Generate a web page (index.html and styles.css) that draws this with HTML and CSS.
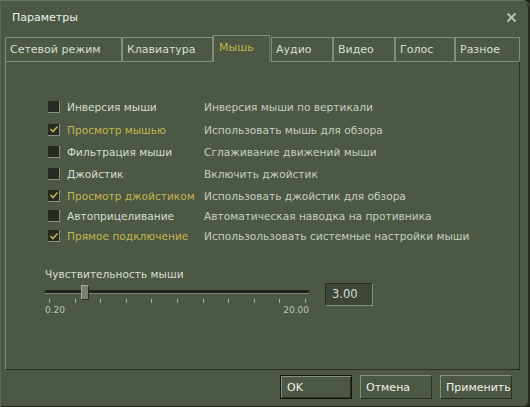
FILE: index.html
```html
<!DOCTYPE html>
<html lang="ru">

<head>
    <meta charset="UTF-8">
    <title>Параметры</title>
    <link rel="stylesheet" href="styles.css">
</head>

<body>
    <div class="window">
        <div class="titlebar">
            <span class="title">Параметры</span>
            <button class="close-btn">
                <svg width="11" height="11" viewBox="0 0 11 11">
                    <path d="M1.5 1.5 L9.5 9.5 M9.5 1.5 L1.5 9.5" stroke="#b9c0b3" stroke-width="2" fill="none" />
                </svg>
            </button>
        </div>

        <!-- Tabs -->
        <div class="tabs">
            <div class="tab tab-net">Сетевой режим</div>
            <div class="tab tab-keys">Клавиатура</div>
            <div class="tab tab-mouse active">Мышь</div>
            <div class="tab tab-audio">Аудио</div>
            <div class="tab tab-video">Видео</div>
            <div class="tab tab-voice">Голос</div>
            <div class="tab tab-misc">Разное</div>
        </div>

        <div class="panel">
            <!-- Mouse options -->
            <div class="options">
                <span class="check"></span>
                <span class="opt-label">Инверсия мыши</span>
                <span class="opt-desc">Инверсия мыши по вертикали</span>

                <span class="check checked"><svg width="10" height="10" viewBox="0 0 10 10"><path d="M1.5 5 L4 7.5 L8.5 2.5" /></svg></span>
                <span class="opt-label on">Просмотр мышью</span>
                <span class="opt-desc">Использовать мышь для обзора</span>

                <span class="check"></span>
                <span class="opt-label">Фильтрация мыши</span>
                <span class="opt-desc">Сглаживание движений мыши</span>

                <span class="check"></span>
                <span class="opt-label">Джойстик</span>
                <span class="opt-desc">Включить джойстик</span>

                <span class="check checked"><svg width="10" height="10" viewBox="0 0 10 10"><path d="M1.5 5 L4 7.5 L8.5 2.5" /></svg></span>
                <span class="opt-label on">Просмотр джойстиком</span>
                <span class="opt-desc">Использовать джойстик для обзора</span>

                <span class="check"></span>
                <span class="opt-label">Автоприцеливание</span>
                <span class="opt-desc">Автоматическая наводка на противника</span>

                <span class="check checked"><svg width="10" height="10" viewBox="0 0 10 10"><path d="M1.5 5 L4 7.5 L8.5 2.5" /></svg></span>
                <span class="opt-label on">Прямое подключение</span>
                <span class="opt-desc">Использользовать системные настройки мыши</span>
            </div>

            <!-- Sensitivity -->
            <div class="sens">
                <div class="sens-label">Чувствительность мыши</div>
                <div class="sens-row">
                    <div class="slider">
                        <div class="track"></div>
                        <div class="thumb"></div>
                        <div class="ticks">
                            <span></span><span></span><span></span><span></span><span></span><span></span>
                            <span></span><span></span><span></span><span></span><span></span>
                        </div>
                        <div class="scale"><span>0.20</span><span>20.00</span></div>
                    </div>
                    <div class="entry">3.00</div>
                </div>
            </div>
        </div>

        <div class="buttons">
            <button class="btn btn-default">OK</button>
            <button class="btn">Отмена</button>
            <button class="btn">Применить</button>
        </div>
    </div>
</body>

</html>
```

FILE: styles.css
```css
:root {
    --bg: #4c5844;
    --text: #d8ded3;
    --text-dim: #c7cdc1;
    --accent: #c4b550;
    --light: #889180;
    --dark: #282e22;
}

* {
    margin: 0;
    padding: 0;
    box-sizing: border-box;
}

body {
    background: #1d2119;
    font-family: 'DejaVu Sans', sans-serif;
    font-size: 10.6px;
    color: var(--text);
}

.window {
    width: 530px;
    height: 407px;
    background: var(--bg);
    border-radius: 0 8px 6px 0;
    box-shadow: inset 0 1px #66725d, inset 1px 0 #5a6651, inset -2px 0 #262b21, inset 0 -1px #262b21;
}

/* Title bar */
.titlebar {
    height: 35px;
    display: flex;
    align-items: center;
    justify-content: space-between;
    padding: 0 12px 0 12px;
}

.title {
    font-size: 11px;
    color: #f0f2ee;
}

.close-btn {
    background: transparent;
    border: none;
    width: 11px;
    height: 11px;
    display: flex;
    margin-right: 1px;
}

/* Tabs */
.tabs {
    display: flex;
    align-items: flex-end;
    height: 26px;
    padding-left: 5px;
    font-size: 11px;
}

.tab {
    height: 24px;
    line-height: 23px;
    padding-left: 4px;
    border: 1px solid #858e7d;
    border-bottom: none;
    white-space: nowrap;
}

.tab.active {
    height: 27px;
    margin-bottom: -1px;
    line-height: 24px;
    padding-left: 5px;
    color: var(--accent);
    background: var(--bg);
    position: relative;
    z-index: 1;
    border-right-color: #6d7766;
}

.tab-net { width: 117px; }
.tab-keys { width: 91px; }
.tab-mouse { width: 57px; }
.tab-audio { width: 62px; margin-left: 1px; }
.tab-video { width: 62px; }
.tab-voice { width: 60px; }
.tab-misc { width: 65px; }

/* Panel */
.panel {
    width: 515px;
    height: 309px;
    margin-left: 5px;
    border-top: 1px solid #858e7d;
    border-left: 1px solid #858e7d;
    border-right: 1px solid var(--dark);
    border-bottom: 1px solid var(--dark);
}

.options {
    display: grid;
    grid-template-columns: 12px 133px auto;
    grid-template-rows: 23px 23px 22px 22px 21px 20px 20px;
    align-items: center;
    column-gap: 7px;
    margin: 33px 0 0 42px;
}

.check {
    width: 12px;
    height: 12px;
    background: #262b21;
    border-right: 1px solid var(--light);
    border-bottom: 1px solid var(--light);
    display: flex;
    align-items: center;
    justify-content: center;
}

.check svg path {
    fill: none;
    stroke: var(--accent);
    stroke-width: 1.6;
}

.opt-label {
    white-space: nowrap;
    overflow: hidden;
}

.opt-label.on {
    color: var(--accent);
}

.opt-desc {
    color: var(--text-dim);
    margin-left: -3px;
    white-space: nowrap;
}

/* Sensitivity slider */
.sens {
    margin: 21px 0 0 39px;
}

.sens-label {
    line-height: 14px;
}

.sens-row {
    display: flex;
    align-items: flex-start;
    margin-top: 2px;
}

.slider {
    width: 264px;
    height: 34px;
    position: relative;
}

.track {
    margin-top: 7px;
    height: 4px;
    background: #1f231b;
    border-bottom: 1px solid #7c8574;
}

.thumb {
    position: absolute;
    left: 36px;
    top: 2px;
    width: 8px;
    height: 15px;
    background: #7b8076;
    border-top: 1px solid #a7ada1;
    border-left: 1px solid #a7ada1;
    border-right: 1px solid #2a2e26;
    border-bottom: 1px solid #2a2e26;
}

.ticks {
    display: flex;
    justify-content: space-between;
    margin: 5px 0 0 4px;
    width: 257px;
}

.ticks span {
    width: 1px;
    height: 4px;
    background: #a3ab9d;
}

.scale {
    display: flex;
    justify-content: space-between;
    font-size: 9px;
    line-height: 10px;
    margin-top: 2px;
    color: #bfc5ba;
}

.entry {
    width: 48px;
    height: 23px;
    margin-left: 16px;
    background: #3e4737;
    border-top: 1px solid var(--dark);
    border-left: 1px solid var(--dark);
    border-right: 1px solid var(--light);
    border-bottom: 1px solid var(--light);
    font-size: 11.5px;
    line-height: 21px;
    padding-left: 6px;
}

/* Bottom buttons */
.buttons {
    display: flex;
    justify-content: flex-end;
    gap: 8px;
    padding: 5px 18px 0 0;
}

.btn {
    width: 72px;
    height: 24px;
    background: var(--bg);
    color: #f0f2ee;
    font-family: 'DejaVu Sans', sans-serif;
    font-size: 11px;
    text-align: left;
    padding-left: 5px;
    border-top: 1px solid var(--light);
    border-left: 1px solid var(--light);
    border-right: 1px solid var(--dark);
    border-bottom: 1px solid var(--dark);
}

.btn-default {
    border: 1px solid #14170f;
    box-shadow: inset 1px 1px #889180, inset -1px -1px #282e22;
    padding-left: 6px;
}
```
